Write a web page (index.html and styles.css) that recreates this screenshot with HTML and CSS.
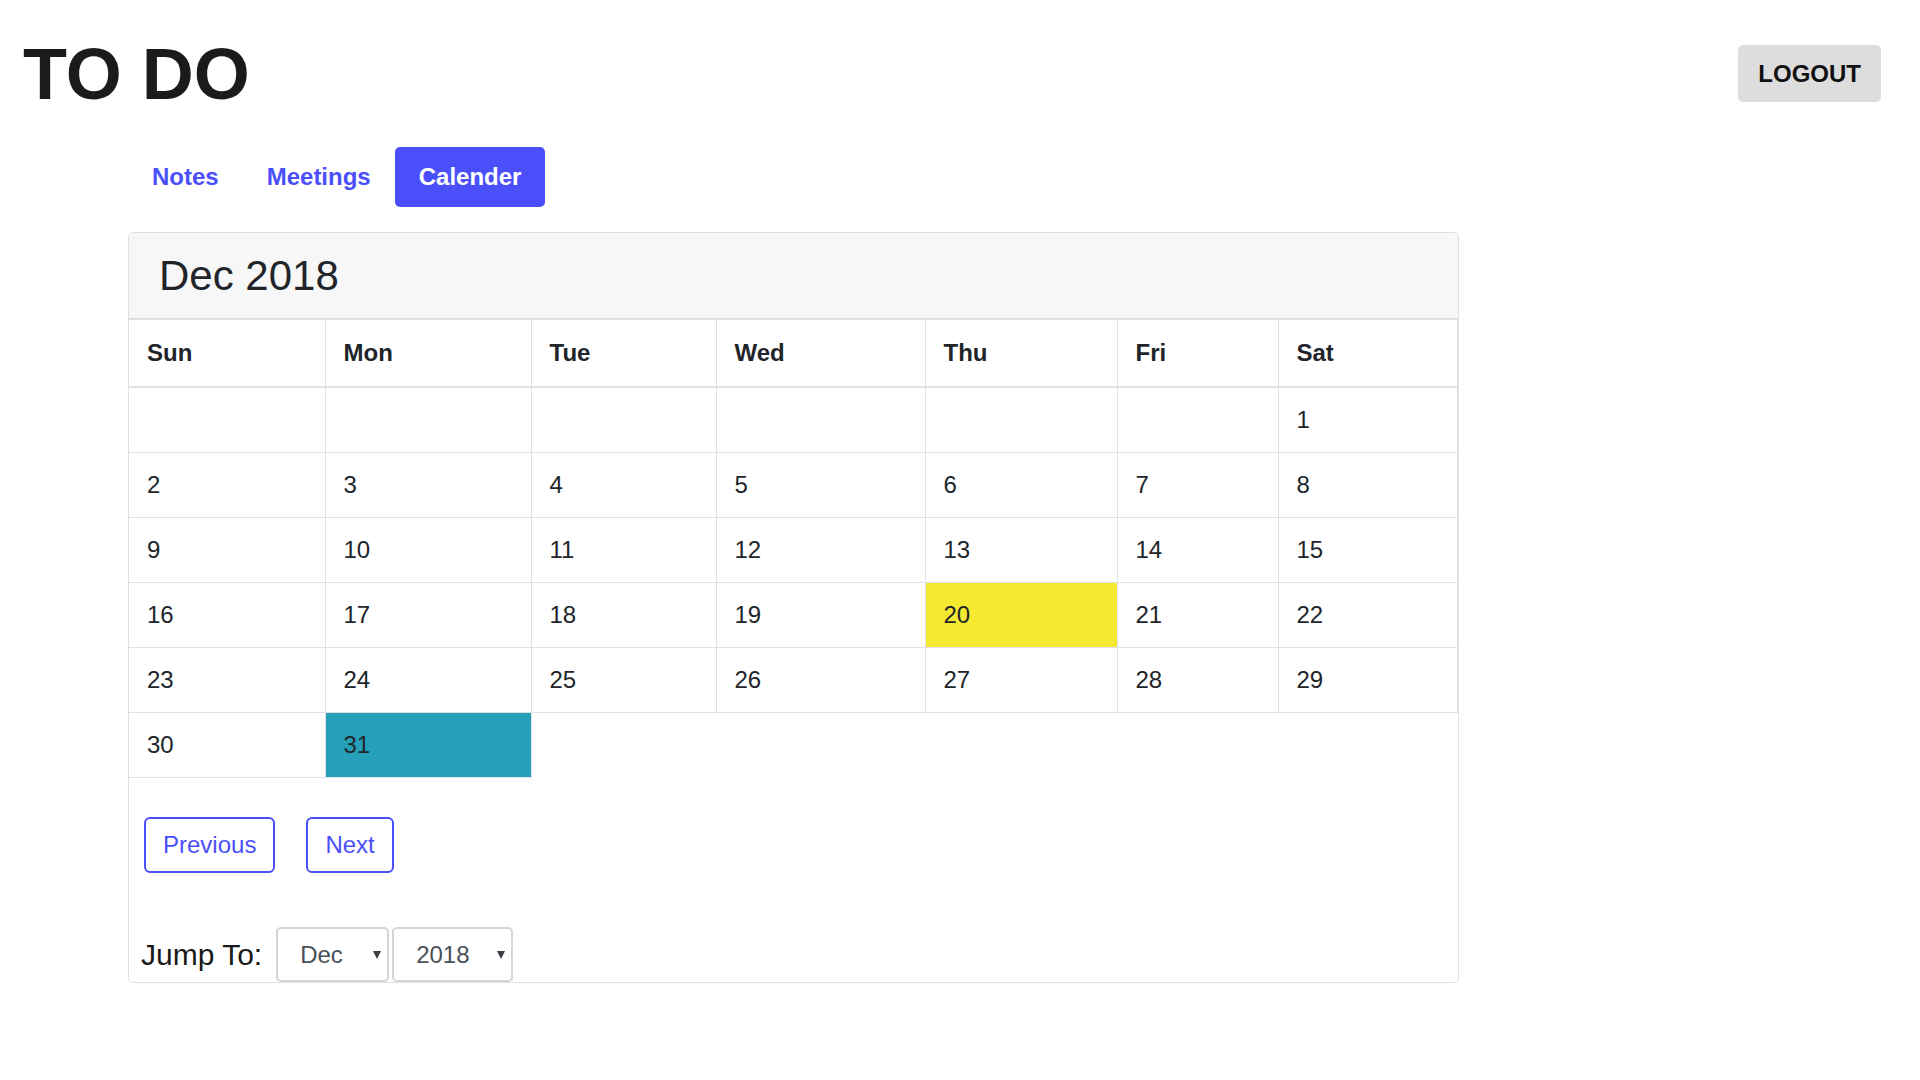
FILE: index.html
```html
<!DOCTYPE html>
<html lang="en">
<head>
<meta charset="utf-8">
<title>TO DO</title>
<link rel="stylesheet" href="styles.css">
</head>
<body>
<header class="topbar">
  <h1 class="brand">TO DO</h1>
  <button class="logout" type="button">LOGOUT</button>
</header>

<nav class="tabs">
  <a class="tab" href="#">Notes</a>
  <a class="tab" href="#">Meetings</a>
  <a class="tab active" href="#">Calender</a>
</nav>

<section class="card">
  <div class="card-header">
    <h2 class="month-title">Dec 2018</h2>
  </div>
  <table class="calendar">
    <colgroup>
      <col class="c1"><col class="c2"><col class="c3"><col class="c4"><col class="c5"><col class="c6"><col class="c7">
    </colgroup>
    <thead>
      <tr><th>Sun</th><th>Mon</th><th>Tue</th><th>Wed</th><th>Thu</th><th>Fri</th><th>Sat</th></tr>
    </thead>
    <tbody>
      <tr><td></td><td></td><td></td><td></td><td></td><td></td><td>1</td></tr>
      <tr><td>2</td><td>3</td><td>4</td><td>5</td><td>6</td><td>7</td><td>8</td></tr>
      <tr><td>9</td><td>10</td><td>11</td><td>12</td><td>13</td><td>14</td><td>15</td></tr>
      <tr><td>16</td><td>17</td><td>18</td><td>19</td><td class="today">20</td><td>21</td><td>22</td></tr>
      <tr><td>23</td><td>24</td><td>25</td><td>26</td><td>27</td><td>28</td><td>29</td></tr>
      <tr><td>30</td><td class="selected">31</td></tr>
    </tbody>
  </table>

  <div class="pager">
    <button class="btn-outline" type="button">Previous</button>
    <button class="btn-outline" type="button">Next</button>
  </div>

  <form class="jump">
    <label class="jump-label" for="month">Jump To:</label>
    <span class="select-wrap month">
      <select id="month" class="select">
        <option>Jan</option><option>Feb</option><option>Mar</option><option>Apr</option>
        <option>May</option><option>Jun</option><option>Jul</option><option>Aug</option>
        <option>Sep</option><option>Oct</option><option>Nov</option><option selected>Dec</option>
      </select>
      <span class="caret"></span>
    </span>
    <span class="select-wrap year">
      <select id="year" class="select">
        <option>2017</option><option selected>2018</option><option>2019</option>
      </select>
      <span class="caret"></span>
    </span>
  </form>
</section>
</body>
</html>
```

FILE: styles.css
```css
html, body {
  margin: 0;
  padding: 0;
  background: #ffffff;
}

body {
  font-family: "Liberation Sans", Arial, Helvetica, sans-serif;
  color: #212529;
}

.topbar {
  display: flex;
  align-items: center;
  justify-content: space-between;
  padding: 34px 39px 0 23px;
}

.brand {
  margin: 0;
  font-size: 72px;
  line-height: 80px;
  font-weight: bold;
  color: #1b1b1b;
}

.logout {
  font-family: inherit;
  font-size: 24px;
  font-weight: bold;
  line-height: 27px;
  color: #111111;
  background: #dddddd;
  border: 0;
  border-radius: 5px;
  padding: 15px 20px;
  margin: 0 0 2px;
}

.tabs {
  display: flex;
  margin: 33px 0 0 128px;
}

.tab {
  font-size: 24px;
  font-weight: bold;
  line-height: 36px;
  padding: 12px 24px;
  color: #4b4ffa;
  text-decoration: none;
  border-radius: 5px;
}

.tab.active {
  background: #4b4ffa;
  color: #ffffff;
}

.card {
  margin: 25px 0 0 128px;
  width: 1331px;
  box-sizing: border-box;
  border: 1px solid #dfdfdf;
  border-radius: 5px;
  overflow: hidden;
}

.card-header {
  background: #f7f7f7;
  padding: 18px 30px 17px;
  border-bottom: 1px solid #dcdcdc;
}

.month-title {
  margin: 0;
  font-size: 42px;
  line-height: 50px;
  font-weight: normal;
  color: #212529;
}

.calendar {
  width: 100%;
  table-layout: fixed;
  border-collapse: collapse;
  font-size: 24px;
  line-height: 28px;
  color: #212529;
}

.c1 { width: 196px; }
.c2 { width: 206px; }
.c3 { width: 185px; }
.c4 { width: 209px; }
.c5 { width: 192px; }
.c6 { width: 161px; }

.calendar th,
.calendar td {
  border: 1px solid #dee2e6;
  padding: 18px 18px;
  text-align: left;
  vertical-align: top;
}

.calendar tr > :first-child {
  border-left: 0;
}

.calendar tr > :nth-child(7) {
  border-right: 1px solid #dee2e6;
}

.calendar th {
  font-weight: bold;
  padding-top: 19px;
  padding-bottom: 19px;
  border-bottom: 2px solid #dee2e6;
}

.calendar td.today {
  background: #f5e932;
}

.calendar td.selected {
  background: #25a0b8;
}

.pager {
  display: flex;
  gap: 31px;
  padding: 39px 0 0 15px;
}

.btn-outline {
  font-family: inherit;
  font-size: 24px;
  line-height: 36px;
  padding: 8px 17px;
  margin: 0;
  color: #4b4ffa;
  background: #ffffff;
  border: 2px solid #4b4ffa;
  border-radius: 6px;
}

.jump {
  display: flex;
  align-items: center;
  margin: 0;
  padding: 54px 0 0 12px;
}

.jump-label {
  font-size: 30px;
  line-height: 34px;
  color: #1a1a1a;
  margin-right: 14px;
}

.select-wrap {
  position: relative;
  display: block;
  margin-right: 3px;
}

.select {
  appearance: none;
  -webkit-appearance: none;
  display: block;
  box-sizing: border-box;
  height: 55px;
  margin: 0;
  padding: 0 0 0 22px;
  font-family: inherit;
  font-size: 24px;
  color: #495057;
  background: #ffffff;
  border: 2px solid #d2d6db;
  border-radius: 5px;
}

.select-wrap.month .select { width: 113px; }
.select-wrap.year .select { width: 121px; }

.caret {
  position: absolute;
  right: 8px;
  top: 24px;
  width: 0;
  height: 0;
  border-left: 4px solid transparent;
  border-right: 4px solid transparent;
  border-top: 8px solid #3a3f45;
  pointer-events: none;
}
```
